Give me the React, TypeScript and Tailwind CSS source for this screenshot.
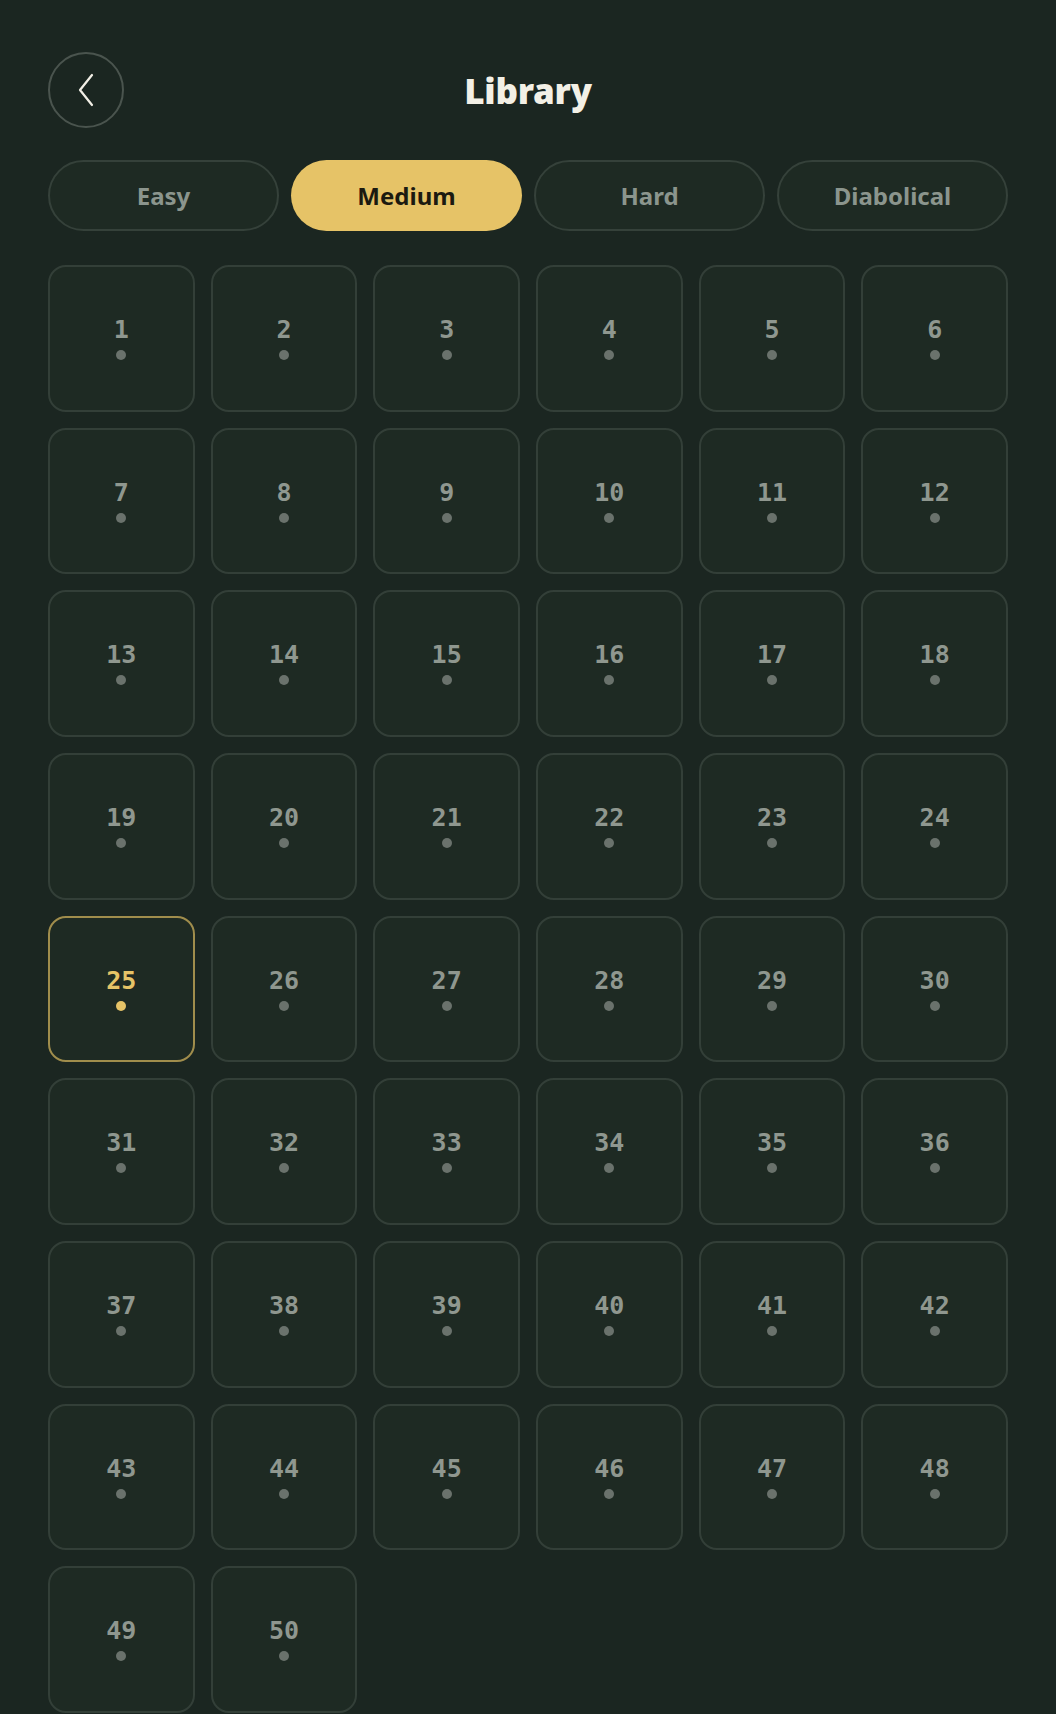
import React from "react";

const tabs = ["Easy", "Medium", "Hard", "Diabolical"];

export default function App() {
  const nums = Array.from({ length: 50 }, (_, i) => i + 1);
  return (
    <div className="min-h-screen bg-[#1b2621] px-12 pt-[52px] pb-8" style={{ fontFamily: '"Noto Sans", "Open Sans", sans-serif' }}>
      <div className="grid grid-cols-[76px_1fr_76px] items-center">
        <button className="w-[76px] h-[76px] rounded-full border-2 border-[#4a544e] flex items-center justify-center">
          <svg width="22" height="36" viewBox="0 0 22 36" fill="none">
            <polyline points="17,3 5,18 17,33" stroke="#f2efe6" strokeWidth="2.2" strokeLinecap="round" strokeLinejoin="round" />
          </svg>
        </button>
        <h1 className="text-center text-[35px] font-black text-[#f3f0e6] leading-none tracking-[-0.3px]">Library</h1>
        <div />
      </div>

      <div className="mt-[32px] grid grid-cols-4 gap-3">
        {tabs.map((t) => {
          const active = t === "Medium";
          return (
            <button
              key={t}
              className={
                active
                  ? "h-[71px] rounded-full bg-[#e6c367] text-[#1c1a10] text-[24px] font-bold"
                  : "h-[71px] rounded-full bg-[#1e2a23] border-2 border-[#35413a] text-[#8b958d] text-[24px] font-bold"
              }
            >
              {t}
            </button>
          );
        })}
      </div>

      <div className="mt-[34px] grid grid-cols-6 gap-4">
        {nums.map((n) => {
          const active = n === 25;
          return (
            <div
              key={n}
              className={
                active
                  ? "aspect-square rounded-[18px] border-2 border-[#a08d4c] bg-[#1e2a23] flex flex-col items-center justify-center"
                  : "aspect-square rounded-[18px] border-2 border-[#333f38] bg-[#1e2a23] flex flex-col items-center justify-center"
              }
            >
              <span
                className={active ? "text-[25px] leading-[26px] font-bold text-[#e6c367]" : "text-[25px] leading-[26px] font-bold text-[#8f978f]"}
                style={{ fontFamily: '"DejaVu Sans Mono", "Liberation Mono", monospace' }}
              >
                {n}
              </span>
              <span className={active ? "mt-[7px] w-[10px] h-[10px] rounded-full bg-[#e6c367]" : "mt-[7px] w-[10px] h-[10px] rounded-full bg-[#6a726c]"} />
            </div>
          );
        })}
      </div>
    </div>
  );
}
